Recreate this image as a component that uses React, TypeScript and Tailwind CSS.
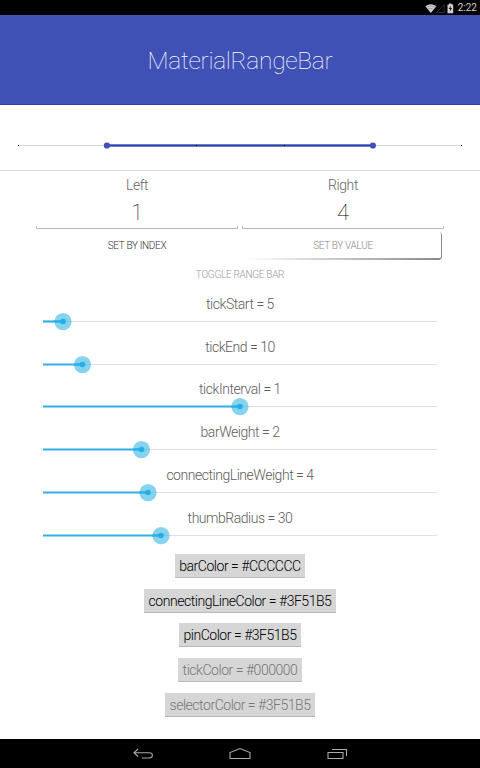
import type { ReactNode } from "react";

const sliders = [
  { label: "tickStart = 5", value: 20 },
  { label: "tickEnd = 10", value: 39.5 },
  { label: "tickInterval = 1", value: 197 },
  { label: "barWeight = 2", value: 98.5 },
  { label: "connectingLineWeight = 4", value: 105 },
  { label: "thumbRadius = 30", value: 118 },
];

const colors = [
  { label: "barColor = #CCCCCC", width: "w-[130px]", enabled: true },
  { label: "connectingLineColor = #3F51B5", width: "w-[192px]", enabled: true },
  { label: "pinColor = #3F51B5", width: "w-[122px]", enabled: true },
  { label: "tickColor = #000000", width: "w-[124px]", enabled: false },
  { label: "selectorColor = #3F51B5", width: "w-[150px]", enabled: false },
];

const ticks = ["left-0", "left-[178px]", "left-[266px]", "left-[443px]"];

function StatusBar() {
  return (
    <div className="flex h-[15px] items-center justify-end bg-black pr-[3px] text-[#d0d0d0]">
      <svg width="30" height="12" viewBox="0 0 30 12" className="mr-[3px]">
        <path d="M0.4 4.2Q5.6 0.2 11.4 4.2L5.8 11Z" fill="#d0d0d0" />
        <path d="M1.5 5.2Q5.7 2.7 10 5.2M3 7.2Q5.7 5.5 8.5 7.2" fill="none" stroke="#777" strokeWidth="0.5" />
        <path d="M19.2 2.7V10.5H11.5Z" fill="none" stroke="#333" strokeWidth="0.9" />
        <path d="M22.5 2.4H24V1.5H26.6V2.4H28.2V11.3H22.5Z" fill="#d0d0d0" />
        <path d="M25.9 3.5L23.7 7H25.2L24.8 9.8L27 6.1H25.5Z" fill="#111" />
      </svg>
      <span className="pt-px text-[10px] leading-none font-normal">2:22</span>
    </div>
  );
}

function RangeBar() {
  return (
    <div className="flex h-[66px] items-center border-b border-[#dedede] pt-[17px] pl-[17.5px]">
      <div className="relative h-2 w-[444.5px] pt-[3px]">
        <div className="h-px w-full bg-[#d4d4d4]" />
        <div className="absolute top-[2px] left-[89.5px] h-[3px] w-[266px] border-y border-[#6f7dc8] bg-[#2f40a7]" />
        {ticks.map((t) => (
          <div key={t} className={`absolute top-[3px] size-px bg-black ${t}`} />
        ))}
        <svg className="absolute top-0 left-[85.5px]" width="273" height="8" viewBox="0 0 273 8" fill="#3f51b5">
          <circle cx="3.9" cy="3.5" r="3.1" />
          <circle cx="269.9" cy="3.5" r="3.1" />
        </svg>
      </div>
    </div>
  );
}

function Field({ title, value }: { title: string; value: string }) {
  return (
    <div className="flex w-[202px] flex-col items-center">
      <div className="mt-1 h-[21px] text-[14px] leading-[21px] tracking-[-0.4px] text-[#666]">{title}</div>
      <div className="flex h-[30px] w-full items-center justify-center pt-[3px] text-[22px] font-thin text-black">
        {value}
      </div>
      <div className="h-[3px] w-full border-x border-b border-[#bbb]" />
    </div>
  );
}

function Slider({ label, value }: { label: string; value: number }) {
  return (
    <div className="flex h-[42.8px] flex-col items-center">
      <div className="h-5 text-[14px] leading-5 tracking-[-0.47px] text-[#5c5c5c]">{label}</div>
      <svg width="412" height="18" viewBox="0 0 412 18" className="-mt-px mb-px">
        <path d="M9 8.5H403" stroke="#e0e0e0" strokeWidth="1" />
        <path d={`M9 8.5H${9 + value}`} stroke="#2fb0e6" strokeWidth="2.2" />
        <circle cx={9 + value} cy="8.6" r="8.6" fill="#33b5e5" fillOpacity="0.6" />
        <path d={`M${value + 0.3} 8.5H${9 + value}`} stroke="#2fb0e6" strokeWidth="2.2" />
        <circle cx={9 + value} cy="8.5" r="2.8" fill="#27ace4" />
      </svg>
    </div>
  );
}

function NavButton({ children }: { children: ReactNode }) {
  return (
    <svg width="24" height="14" viewBox="0 0 24 14" fill="none" stroke="#aaa" strokeWidth="1.1">
      {children}
    </svg>
  );
}

export default function App() {
  return (
    <div className="flex h-[768px] w-[480px] flex-col overflow-hidden bg-white font-[Roboto,sans-serif] font-light">
      <StatusBar />
      <header className="flex h-[90px] items-center justify-center border-b border-[#2f40a7] bg-[#3f51b5] pt-[4px] text-[24.5px] font-thin tracking-[-0.28px] text-white">
        MaterialRangeBar
      </header>
      <RangeBar />
      <div className="flex h-[59px] justify-center gap-1">
        <Field title="Left" value="1" />
        <Field title="Right" value="4" />
      </div>
      <div className="flex h-[32px] justify-center gap-1 text-[10px] tracking-[-0.32px]">
        <button className="h-[30px] w-[202px] text-[#333]">SET BY INDEX</button>
        <button className="relative h-[30px] w-[202px] text-[#888]">
          SET BY VALUE
          <span className="absolute right-[2px] bottom-0 h-[28px] w-[196px] rounded-[3px] border-r border-b-2 border-[#888] [mask-image:linear-gradient(to_right,transparent,black)]" />
        </button>
      </div>
      <button className="h-[25px] text-[10px] tracking-[-0.3px] text-[#999]">TOGGLE RANGE BAR</button>
      <div className="flex h-[265px] flex-col pt-[6.8px]">
        {sliders.map((s) => (
          <Slider key={s.label} {...s} />
        ))}
      </div>
      <div className="flex h-[187px] flex-col items-center gap-[10.7px] pt-[2px]">
        {colors.map((c) => (
          <button
            key={c.label}
            className={`h-6 shrink-0 whitespace-nowrap border-b border-[#b8b8b8] bg-[#d6d6d6] pt-px text-[14px] leading-5 tracking-[-0.47px] ${c.width} ${c.enabled ? "text-black" : "text-[#777]"}`}
          >
            {c.label}
          </button>
        ))}
      </div>
      <nav className="flex h-[29px] items-center justify-center gap-[73px] bg-black">
        <NavButton>
          <path d="M7 2L3 5.7L7 9.5M3 5.7H18C22.5 5.7 22.5 11 18 11H11" />
        </NavButton>
        <NavButton>
          <path d="M2 11.5V5.5L12 1.5L22 5.5V11.5Z" />
        </NavButton>
        <NavButton>
          <path d="M3 5.5H18V11.5H3ZM7 2.5H21.5V9" />
        </NavButton>
      </nav>
    </div>
  );
}
